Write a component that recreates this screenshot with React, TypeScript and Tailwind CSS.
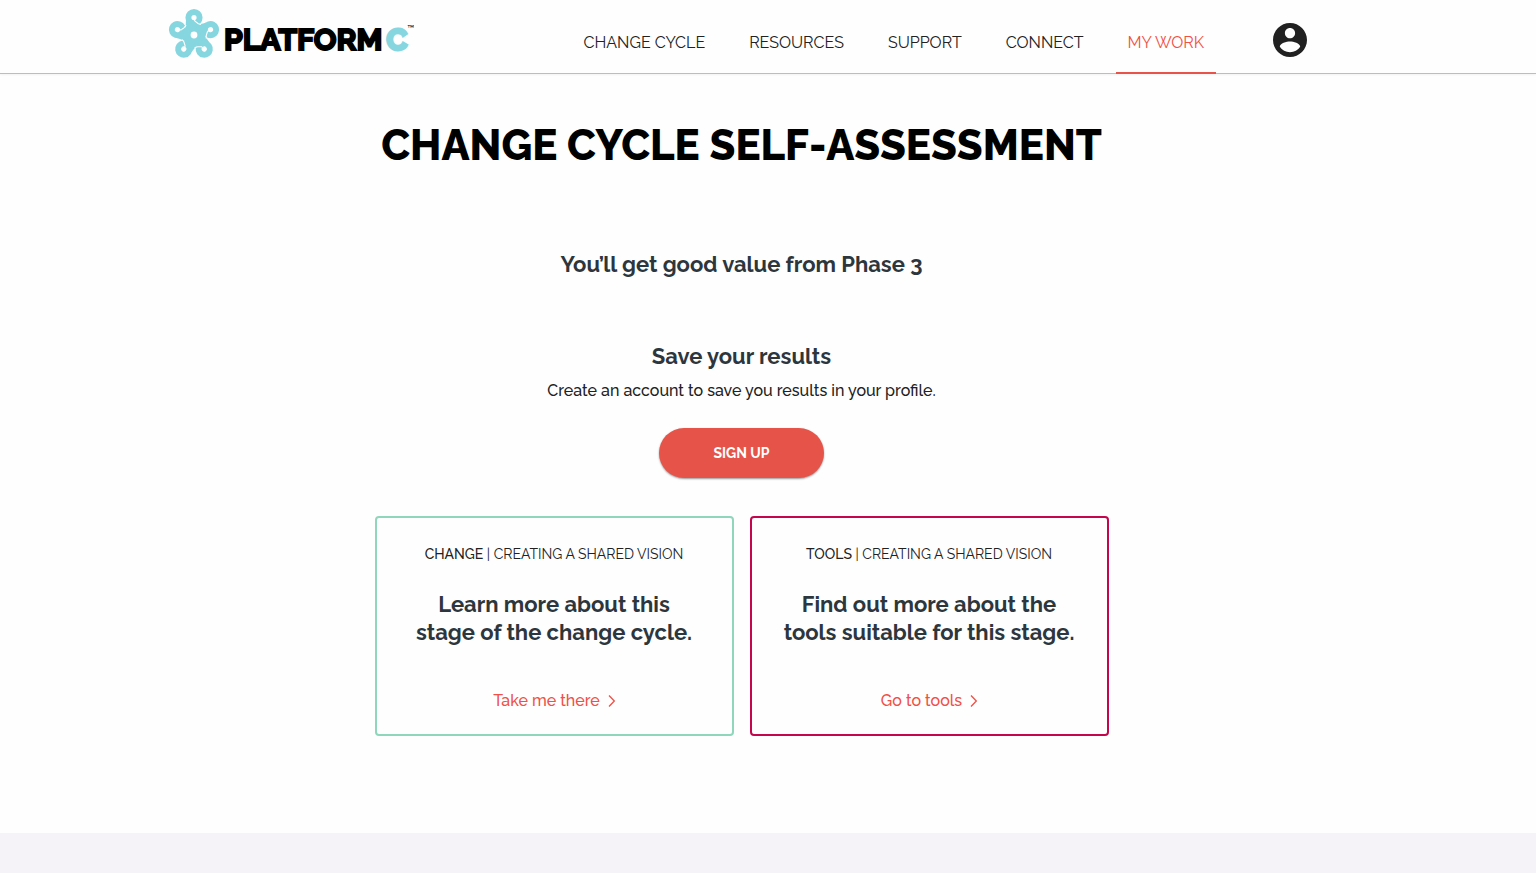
import clsx from "clsx";

const navLinks = [
    { label: "CHANGE CYCLE", active: false },
    { label: "RESOURCES", active: false },
    { label: "SUPPORT", active: false },
    { label: "CONNECT", active: false },
    { label: "MY WORK", active: true },
];

const cards = [
    {
        section: "CHANGE",
        stage: "CREATING A SHARED VISION",
        lines: ["Learn more about this", "stage of the change cycle."],
        link: "Take me there",
        border: "border-[#8fd6bd]",
    },
    {
        section: "TOOLS",
        stage: "CREATING A SHARED VISION",
        lines: ["Find out more about the", "tools suitable for this stage."],
        link: "Go to tools",
        border: "border-[#c4074b]",
    },
];

const petals = [0, 72, 144, 216, 288];

function Emblem() {
    return (
        <svg viewBox="-26 -26 52 52" className="h-[52px] w-[52px] shrink-0" fill="none" aria-hidden="true">
            <circle r="7.2" stroke="#86d6e0" strokeWidth="7.6" />
            {petals.map((angle) => (
                <g key={angle} transform={`rotate(${angle})`}>
                    <path d="M-6 -5 L-5.5 -15" stroke="#86d6e0" strokeWidth="5" />
                    <circle cy="-17.4" r="5.6" stroke="#86d6e0" strokeWidth="6" />
                </g>
            ))}
            {petals.map((angle) => (
                <path
                    key={angle}
                    transform={`rotate(${angle})`}
                    d="M0 -17 L0.8 -14 L4 -11.6 L7 -10.6"
                    stroke="#fefefe"
                    strokeWidth="1.1"
                />
            ))}
        </svg>
    );
}

function Logo() {
    return (
        <a href="#" aria-label="Platform C" className="flex items-center">
            <Emblem />
            <span className="ml-1 flex pt-[10px] text-[30px] leading-9 font-bold text-black [-webkit-text-stroke:2px]">
                PLATFORM
                <span className="ml-1 text-[#86d6e0] [-webkit-text-stroke:3px]">C</span>
            </span>
            <span className="mb-3 text-[10px] leading-2 text-black">™</span>
        </a>
    );
}

function AccountIcon() {
    return (
        <svg viewBox="2 2 20 20" className="h-[34px] w-[34px]" fill="#212121" aria-hidden="true">
            <path d="M12 2C6.48 2 2 6.48 2 12s4.48 10 10 10 10-4.48 10-10S17.52 2 12 2zm0 3c1.66 0 3 1.34 3 3s-1.34 3-3 3-3-1.34-3-3 1.34-3 3-3zm0 14.2c-2.5 0-4.71-1.28-6-3.22.03-1.99 4-3.08 6-3.08 1.99 0 5.97 1.09 6 3.08-1.29 1.94-3.5 3.22-6 3.22z" />
        </svg>
    );
}

function Header() {
    return (
        <header className="border-b border-[#bdbdbd] shadow-xs">
            <div className="mx-auto flex h-[73px] max-w-[1200px] items-start justify-between">
                <div className="pt-[9px]">
                    <Logo />
                </div>
                <div className="flex pr-[61px]">
                    <nav className="flex gap-5">
                        {navLinks.map((item) => (
                            <a
                                key={item.label}
                                href="#"
                                className={clsx(
                                    "flex h-[74px] items-center border-b-2 px-3 pt-[14px] text-base whitespace-nowrap",
                                    item.active ? "border-[#e65348] text-[#f05046]" : "border-transparent text-[#212121]"
                                )}
                            >
                                {item.label}
                            </a>
                        ))}
                    </nav>
                    <button type="button" aria-label="Account" className="ml-[57px] h-20">
                        <AccountIcon />
                    </button>
                </div>
            </div>
        </header>
    );
}

export default function App() {
    return (
        <div className="flex min-h-screen flex-col bg-[#fefefe] font-['Raleway','Lato',sans-serif] text-[#212121]">
            <Header />
            <main className="mx-auto w-full max-w-[1200px] flex-1 pr-[53px] pb-24 text-center">
                <h1 className="pt-[45px] text-[42px] leading-[54px] font-extrabold text-black">CHANGE CYCLE SELF-ASSESSMENT</h1>
                <h2 className="mt-[77px] text-[22px] leading-7 font-bold text-[#2d363d]">You’ll get good value from Phase 3</h2>
                <h2 className="mt-16 text-[22px] leading-7 font-bold text-[#2d363d]">Save your results</h2>
                <p className="mt-[9px] text-base font-medium">Create an account to save you results in your profile.</p>
                <button type="button" className="mt-[25px] h-[50px] w-[165px] rounded-full bg-[#e65348] text-sm font-bold text-white shadow-[0_1px_2px_rgba(0,0,0,0.4)]">
                    SIGN UP
                </button>
                <div className="mx-auto mt-[38px] grid max-w-[734px] grid-cols-2 gap-4">
                    {cards.map((card) => (
                        <section key={card.section} className={clsx("rounded-sm border-2 px-4 pt-6 pb-[21px] text-center", card.border)}>
                            <p className="text-sm leading-6">
                                <span className="font-medium">{card.section}</span> | {card.stage}
                            </p>
                            <h3 className="mt-6 text-[22px] leading-7 font-bold text-[#2d363d]">
                                {card.lines[0]}
                                <br />
                                {card.lines[1]}
                            </h3>
                            <a href="#" className="mt-[43px] inline-flex items-center gap-2 text-base font-medium text-[#f05046]">
                                {card.link}
                                <svg viewBox="0 0 7 12" className="h-3 w-[7px]" fill="none" stroke="currentColor" strokeWidth="1.3" aria-hidden="true">
                                    <path d="M1 0.5 6.3 6 1 11.5" />
                                </svg>
                            </a>
                        </section>
                    ))}
                </div>
            </main>
            <footer className="h-10 bg-[#f5f3f7]" />
        </div>
    );
}
